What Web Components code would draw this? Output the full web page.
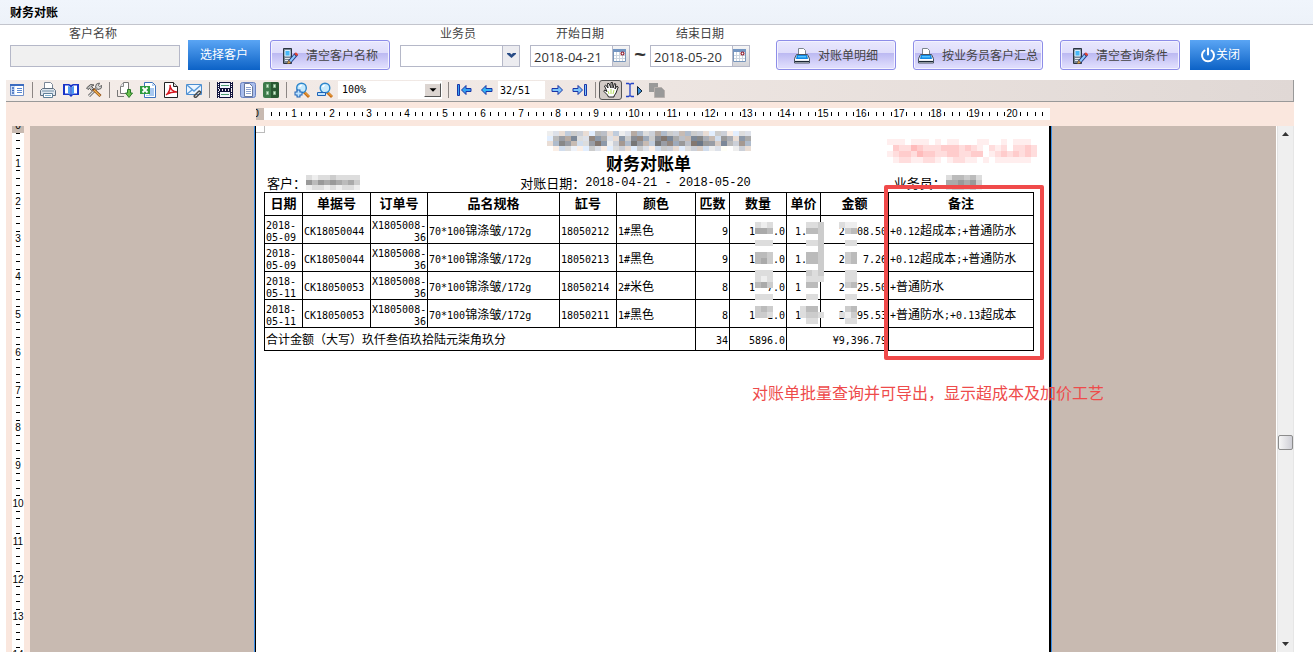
<!DOCTYPE html>
<html lang="zh-CN">
<head>
<meta charset="utf-8">
<title>财务对账</title>
<style>
html,body{height:100%}
body{margin:0;background:#fff;font:12px/18px "Open Sans","Noto Sans CJK SC",sans-serif;color:#333;overflow:hidden}
</style>
</head>
<body>
<finance-app></finance-app>
<script>
const ICONS={
 side:'<path fill="#fff" stroke="#6f8fc8" d="M1.500 2.500h13v11h-13z"/><path fill="#3c6cc0" d="M1 2h14v2H1z"/><path fill="#cfe0fa" d="M2 4h4v9H2z"/><path stroke="#3a66b8" stroke-width="1.500" d="M3 6h2M3 8.500h2M3 11h2"/><path stroke="#5c88d0" d="M8 6.500h5M8 8.500h5M8 10.500h5"/>',
 print:'<path fill="#fff" stroke="#7b8797" d="M4.500 7V.500h6l2 2V7"/><path fill="#dfe6ee" stroke="#5f6f80" d="M2.500 6.500h11l2 2v5H.500v-5z"/><path fill="#a9bccb" d="M2 8h12v2H2z"/><path fill="#fff" stroke="#5f7f98" d="M3.500 11.500h9v4h-9z"/><path stroke="#7fb0d0" d="M5 13.500h6"/>',
 book:'<path fill="#1733c8" d="M0 2h6l2 1 2-1h6v11h-6l-2 2-2-2H0z"/><path fill="#fff" d="M2 3.500h3.500L7.300 5v7.500L5.500 11.500H2zM14 3.500h-3.500L8.700 5v7.500l1.800-1H14z"/><path fill="#4d9bf2" d="M5 4l2.300 1v7.500L5 11.500zM11 4L8.700 5v7.500l2.300-1z"/>',
 tools:'<path stroke="#555" stroke-width="2.800" d="M3 14l8-8"/><path stroke="#e2e2e2" stroke-width="1.200" d="M3 14l8-8"/><path fill="#d8d8d8" stroke="#666" d="M9.500 5l1-3 3-1-1 2.500 1 1L16 3.500l-1 3-3 1z"/><path stroke="#8a4a16" stroke-width="3" d="M7 7l7.500 7"/><path stroke="#f0b04a" stroke-width="1.400" d="M8 8l6 5.700"/><path fill="#bcbcbc" stroke="#555" d="M.500 6l4-3.500 3.500.500L5.500 4.500 7.500 6.500 5.500 8.500l-2-2-1.500 1z"/>',
 export:'<path fill="#fff" stroke="#777" d="M3.500 11.500v-7l3-4h5v11z"/><path fill="#e8e8ee" stroke="#888" d="M6.500.500v4h-3"/><path fill="none" stroke="#777" d="M.500 8v6.500H7"/><path fill="#6cc04e" stroke="#2a7a2a" d="M10.500 7.500h3v3.500h2L12 15.500 8.500 11h2z"/>',
 excel:'<path fill="#fff" stroke="#3d72bd" d="M4.500.500h8l3 3v12h-11z"/><path fill="#a8c8f0" d="M12 1v3h3zM9 6h5v8H6v-1h3z"/><path fill="#2d9a3e" d="M0 4h10v8H0z"/><path stroke="#fff" stroke-width="1.800" d="M2.500 5.500l5 5M7.500 5.500l-5 5"/>',
 pdf:'<path fill="#fff" stroke="#222" d="M1.500.500h9l4 4v11h-13z"/><path fill="#ddd" stroke="#222" d="M10.500.500v4h4"/><path fill="none" stroke="#d71920" stroke-width="1.500" d="M3 13c3-2 5-7 4-10 0 4 3 7 7 7-4-.500-7 .500-10 2"/>',
 mail:'<path fill="#eef6ff" stroke="#4c8ed0" d="M.500 2.500h15v10H.500z"/><path fill="none" stroke="#5b9ad8" stroke-width="1.400" d="M1 3l7 6 7-6M1 12l5-4"/><path fill="none" stroke="#4a4a4a" stroke-width="1.500" d="M8.500 13.500l4-4c1-1 2.800.500 1.600 1.800l-3.600 3.700c-1.500 1-3-.500-2-1.500z"/>',
 film:'<path fill="#11133c" d="M0 0h16v7H0zM0 9h16v7H0z"/><path fill="#f4f8ff" d="M3 1h10v5H3zM3 10h10v5H3z"/><path stroke="#4c9a70" d="M4 3.500h8M4 12.500h8"/><path stroke="#fff" stroke-dasharray="1 1" d="M1.500 0v7M14.500 0v7M1.500 9v7M14.500 9v7"/><path stroke="#11133c" stroke-dasharray="2 1" d="M0 8h16" stroke-width="2"/>',
 page:'<rect x=".500" y=".500" width="15" height="15" rx="2" fill="#a9bdec" stroke="#6a82c0"/><path fill="#fff" stroke="#68789c" d="M4.500 1.500h5l3 3v10h-8z"/><path stroke="#8ca2d0" d="M6 5.500h5M6 7.500h5M6 9.500h5M6 11.500h5"/>',
 grid:'<rect width="16" height="16" rx="2" fill="#3d7a4a"/><path fill="#285832" d="M8 0h6a2 2 0 012 2v12a2 2 0 01-2 2H8z"/><path fill="#d6eed8" stroke="#88b890" d="M3.500 2.500h2v3h-2zM10.500 2.500h2v3h-2zM3.500 9.500h2v3h-2zM10.500 9.500h2v3h-2z"/>',
 zin:'<path stroke="#c76a14" stroke-width="2.800" d="M10 10l5 5"/><path stroke="#f4b84e" d="M10.500 10l4.500 4.500"/><circle cx="7.500" cy="6" r="4.800" fill="#c8eafc" stroke="#2c86cc" stroke-width="1.400"/><path stroke="#fff" stroke-width="1.500" d="M5.500 5l2-2"/><path stroke="#1c62b6" stroke-width="4" d="M4.500 7.500v8M.500 11.500h8"/><path stroke="#bfe4ff" stroke-width="1.800" d="M4.500 8.500v6M1.500 11.500h6"/>',
 zout:'<path stroke="#c76a14" stroke-width="2.800" d="M10 10l5 5"/><path stroke="#f4b84e" d="M10.500 10l4.500 4.500"/><circle cx="8" cy="6" r="4.800" fill="#c8eafc" stroke="#2c86cc" stroke-width="1.400"/><path stroke="#fff" stroke-width="1.500" d="M5.500 5l2-2"/><path fill="#bfe4ff" stroke="#1c62b6" d="M.500 10.500h8v3h-8z"/>',
 first:'<path fill="#36a2f0" stroke="#1a35a8" d="M1.500 2.500h2v11h-2zM5.500 8l4.500-4.500v3h5v3h-5v3z"/>',
 prev:'<path fill="#36b4f4" stroke="#1a35a8" d="M2.500 8L7 3.500v3h6v3H7v3z"/>',
 next:'<path fill="#7cc4fa" stroke="#1a35a8" d="M13.500 8L9 3.500v3H3v3h6v3z"/>',
 last:'<path fill="#7cc4fa" stroke="#1a35a8" d="M12.500 2.500h2v11h-2zM10.500 8L6 3.500v3H1v3h5v3z"/>',
 hand:'<path fill="#fff" stroke="#222" d="M5.500 15l-1-2L1 9.500 1.500 8 4 9.500 1.500 4l1.200-1L5 6 4.500 1.500H6L8 6V.500h1.500L10 6l1.500-4.500 1.300.500L12 7l2-3 1.200 1L13 11l-2 3v1z"/><path stroke="#b8e060" d="M5 9l1 3M8 7v5M11 8l-1 4"/>',
 text:'<path fill="none" stroke="#2343c8" stroke-width="1.300" d="M0 1.500h2.500l1.500 1 1.500-1H8M4 2v12M0 14.500h2.500l1.500-1 1.500 1H8"/><path fill="#3c8fd8" stroke="#123" d="M11.500 4.500L16 9l-4.500 4z"/>',
 copy:'<path fill="#999" d="M0 1h9v9H0z"/><path fill="#999" stroke="#b7b0ad" d="M5.500 5.500h7l3 3v7h-10z"/>',
 edit:'<path fill="#778492" stroke="#2a3440" d="M1.500.500h8v15h-8z"/><path fill="#48b8f8" stroke="#d8ecfa" d="M3 2.500h5V8H3z"/><path stroke="#e4edf3" d="M3 10.500h5M3 12.500h4"/><path stroke="#273c80" stroke-width="4" d="M7 14.500L14.500 6"/><path stroke="#8ccaff" stroke-width="2" d="M8 13.500l5-6"/><path stroke="#e34432" stroke-width="3" d="M13.500 7l1.500-1.600"/><path fill="#f8c36b" stroke="#7a501c" stroke-width=".700" d="M5.500 16l1-3.500 2.500 2z"/>',
 printer:'<path fill="#fff" stroke="#7b848d" d="M4.500 8V.500h5l2 2V8z"/><path fill="#d2d8df" stroke="#4b5563" d="M2.500 6.500h11l2 4v4.500H.500v-4.500z"/><path fill="#1289e5" d="M3 7h10l1 4H2z"/><path fill="#54c5ff" d="M4 8h8v1.500H4z"/><path fill="#fff" d="M1 11h14v1.500H1z"/><path fill="#1b2733" d="M1 13h14v1H1z"/>',
 power:'<path stroke="#fff" stroke-width="2" stroke-linecap="round" d="M4.500 3.500a6 6 0 1 0 7 0M8 1.500v6"/>',
 cal:'<path fill="#fff" stroke="#7896bb" d="M.500 1.500h12v12H.500z"/><path fill="#7496c2" d="M0 1h13v3H0z"/><path stroke="#cdd6e0" d="M1 7.500h11M1 10.500h11M3.500 4v9M6.500 4v9M9.500 4v9"/><circle cx="9.500" cy="5.500" r="1.500" fill="#fff" stroke="#901a2a" stroke-width="1.200"/>',
 chev:'<path fill="#284c86" d="M4 5h3l1.500 1.500L10 5h3v1L8.500 10 4 6z"/>',
 tri:'<path d="M4 6h8l-4 4z"/>'
};
const svg=(n,s=16)=>`<svg width="${s}" height="${s}" viewBox="0 0 16 16" fill="none" aria-hidden="true">${ICONS[n]}</svg>`;
class Base extends HTMLElement{
  connectedCallback(){
    if(this.shadowRoot)return;
    this.attachShadow({mode:'open'}).innerHTML='<style>*{box-sizing:border-box}svg{display:block;flex:none}'+this.css()+'</style>'+this.view();
  }
  a(n){return this.getAttribute(n)||''}
}

customElements.define('action-button',class extends Base{
  css(){return `:host{display:block;margin-top:15px}
  button{display:flex;align-items:center;justify-content:center;width:100%;height:30px;padding:1px 0 0;font:inherit;white-space:nowrap;color:#444;gap:8px;border:1px solid #8d8de8;border-radius:3px;box-shadow:inset 0 0 0 1px #f4f3ff;background:linear-gradient(#e9e8fd 0,#dfddfb 42%,#bcb9f2 44%,#dddbfc 90%)}
  :host([primary]) button{padding:0;border:0;border-radius:0;color:#fff;gap:0;box-shadow:none;background:linear-gradient(#5aa5f4,#0c62c6)}`}
  view(){const i=this.a('icon');return `<button type="button">${i?svg(i):''}<span><slot></slot></span></button>`}
});

customElements.define('text-field',class extends Base{
  css(){return `:host{display:block}
  label{display:block;height:20px;line-height:18px;text-align:center;padding-right:4px;color:#444}
  .date{padding-right:0}
  .box{display:flex;height:22px;border:1px solid #b5b8c8;background:#fff}
  input,select{flex:1;min-width:0;border:0;padding:2px 3px 0;margin:0;font:13px/18px "Open Sans","Noto Sans CJK SC",sans-serif;color:#333;background:none;appearance:none;border-radius:0;outline:0}
  :host([readonly]) .box{background:#f0f0f0}
  .trig{display:flex;align-items:center;justify-content:center;width:17px;border:0;border-left:1px solid #b5b8c8;padding:0;background:linear-gradient(#f6f6f6,#d4d4d8)}
  .combo .trig{pointer-events:none;background:#ececf0}`}
  view(){
    const k=this.a('kind'),l=this.a('label');
    if(k=='select')return `<label for="f">${l}</label><div class="box combo"><select id="f"><option></option></select><span class="trig">${svg('chev')}</span></div>`;
    if(k=='date')return `<label class="date" for="f">${l}</label><div class="box"><input id="f" type="text" value="${this.a('value')}"><button class="trig" type="button" aria-label="${l}">${svg('cal')}</button></div>`;
    return `<label for="f">${l}</label><div class="box"><input id="f" type="text" readonly></div>`;
  }
});

customElements.define('page-header',class extends Base{
  css(){return `:host{display:block;height:25px;border-bottom:1px solid #c3c5cd;background:linear-gradient(#f0f5fc,#edf2f9)}
  h1{margin:0;padding-left:10px;font:bold 12px/24px "Noto Sans CJK SC",sans-serif;color:#000}`}
  view(){return '<h1><slot></slot></h1>'}
});

customElements.define('query-bar',class extends Base{
  css(){return `:host{display:flex;align-items:flex-start;height:55px;padding-left:10px;gap:10px}
  .w60{width:60px}.w72{width:72px}.w100{width:100px}.w120{width:120px}.w130{width:130px}.w170{width:170px}
  .range,.acts,.cust{display:flex;align-items:flex-start}
  .cust{gap:8px}.range{margin-right:16px}.acts{gap:17px}
  .tilde{width:20px;padding-top:18px;text-align:center;font:bold 20px/22px "Liberation Sans",sans-serif;color:#333}`}
  view(){return `<div class="cust"><text-field class="w170" label="客户名称" readonly></text-field><action-button primary class="w72">选择客户</action-button></div>
  <action-button class="w120" icon="edit">清空客户名称</action-button>
  <text-field class="w120" kind="select" label="业务员"></text-field>
  <div class="range"><text-field class="w100" kind="date" label="开始日期" value="2018-04-21"></text-field><span class="tilde">~</span><text-field class="w100" kind="date" label="结束日期" value="2018-05-20"></text-field></div>
  <div class="acts"><action-button class="w120" icon="printer">对账单明细</action-button><action-button class="w130" icon="printer">按业务员客户汇总</action-button><action-button class="w120" icon="edit">清空查询条件</action-button></div>
  <action-button primary class="w60" icon="power">关闭</action-button>`}
});

customElements.define('report-toolbar',class extends Base{
  css(){return `:host{display:flex;align-items:flex-start;height:22px;border-bottom:1px solid #999;border-right:1px solid #999;background:linear-gradient(90deg,#f4ece8,#f0e8e4 40%,#e0d8d5);font:10px/16px "DejaVu Sans Mono",monospace;color:#000}
  button{display:flex;align-items:center;justify-content:center;width:23px;height:20px;padding:0;border:0;background:none}
  button:first-of-type{width:22px}
  button.on{border:1px solid #555;border-radius:3px;background:#d2cbc7}
  i{width:1px;height:16px;background:#8c8684;margin:2px 3px 0 4px}
  .combo{display:flex;width:104px;height:18px;background:#fff;margin:1px 2px 0;align-items:center;position:relative}
  select,input{height:18px;border:0;margin:0;padding:0 4px;background:#fff;font:inherit;color:#000;appearance:none;outline:0;border-radius:0}
  select{width:100%}
  .arr{position:absolute;right:1px;top:2px;width:17px;height:14px;display:flex;align-items:center;justify-content:center;background:#dcd5d1;border:1px solid;border-color:#fff #555 #555 #fff;pointer-events:none}
  .arr path{fill:#000}
  input{width:47px;padding:0 2px;margin-top:1px}`}
  view(){
    const b=(n,t,c='')=>`<button type="button" class="${c}" aria-label="${t}">${svg(n)}</button>`;
    return b('side','目录')+'<i></i>'+b('print','打印')+b('book','页面')+b('tools','设置')+'<i></i>'+b('export','导出')+b('excel','Excel')+b('pdf','PDF')+b('mail','邮件')+'<i></i>'+b('film','连续')+b('page','单页')+b('grid','多页')+'<i></i>'+b('zin','放大')+b('zout','缩小')
    +`<span class="combo"><select aria-label="缩放"><option>100%</option></select><span class="arr">${svg('tri',14)}</span></span><i></i>`
    +b('first','首页')+b('prev','上一页')+'<input type="text" aria-label="页码" value="32/51">'+b('next','下一页')+b('last','末页')+'<i></i>'+b('hand','平移','on')+b('text','选择文本')+b('copy','复制');
  }
});

/* centimetre ruler, 96 dpi: one fifth of a centimetre per tick */
customElements.define('cm-ruler',class extends Base{
  css(){return `:host{display:block;overflow:hidden;background:#fff}text{font:10px "Liberation Sans",sans-serif;fill:#000;text-anchor:middle}`}
  view(){
    const v=this.a('axis')=='y',n=v?Math.ceil((innerHeight-128)/37.8):+this.a('cm'),len=Math.round(n*37.8);
    let s=v?'<path fill="#c8bab1" d="M0 0h12v7H0z"/>':'<path fill="#c8bab1" d="M0 0h8v12H0z"/>';
    for(let k=0;k<n*5+(v?1:0);k++){
      const p=Math.round(k*7.56);
      if(k%5==0){const t=k/5;s+=v?`<text x="6" y="${p+3}">${t}</text>`:`<text x="${p}" y="9">${t}</text>`}
      else if(k>1||v)s+=v?`<path fill="#000" d="M4 ${p-1}h4v1h-4z"/>`:`<path fill="#000" d="M${p} 4h1v4h-1z"/>`;
    }
    return `<svg width="${v?12:len}" height="${v?len:12}">${s}</svg>`;
  }
});

/* pixelated patch: each character is one block, 0 dark .. f white, dot is empty */
customElements.define('mosaic-patch',class extends Base{
  css(){return ':host{display:inline-block}'}
  view(){
    const rows=this.a('rows').split('/'),u=6,h=+this.a('h')||6,pink=this.hasAttribute('pink');
    const tint=[[0,0,0],[-6,0,8],[6,0,-4],[0,2,6]];
    let s='';
    rows.forEach((r,y)=>[...r].forEach((c,x)=>{
      if(c=='.')return;
      const g=parseInt(c,16)*17,t=this.hasAttribute('tint')?tint[(x*3+y)%4]:tint[0];
      const col=pink?`rgb(255,${g},${g})`:`rgb(${t.map(d=>Math.min(255,g+d*2)).join()})`;
      s+=`<rect x="${x*u}" y="${y*h}" width="${u}" height="${h}" fill="${col}"/>`;
    }));
    return `<svg width="${rows[0].length*u}" height="${rows.length*h}" shape-rendering="crispEdges">${s}</svg>`;
  }
});

customElements.define('report-page',class extends Base{
  css(){return `:host{display:block;position:relative;width:798px;border-left:1px solid #3b8fe8;border-right:1px solid #3b8fe8;background:#fff;color:#000;font:12px/14px "Noto Sans CJK SC",sans-serif}
  .sheet{height:100%;border-left:1px solid #000;border-right:2px solid #000;padding:0 8px}
  .corner{position:absolute;left:1px;top:0;width:9px;height:7px;border:solid #bbb;border-width:0 1px 1px 0}
  .org{display:flex;justify-content:center;padding:5px 8px 0 0;height:27px}
  h2{margin:0;padding-right:8px;text-align:center;font:bold 17px/20px "Noto Sans CJK SC",sans-serif}
  .info{display:grid;grid-template-columns:1fr 1fr 1fr;height:19px;line-height:17px;font-size:13px;white-space:nowrap}
  .info span{display:flex;align-items:center}
  .info .m{justify-content:center;padding-right:34px}
  .info .r{padding-left:109px}
  .info .l{padding-left:3px}
  .n{font-family:"DejaVu Sans Mono",monospace;font-size:10px;line-height:0}
  .info .n{font-family:"Liberation Mono",monospace;font-size:12px;white-space:pre}
  table{border-collapse:collapse;table-layout:fixed;width:769px}
  th,td{border:1px solid #000;padding:0 1px;font-weight:400;text-align:left;white-space:pre;line-height:12px}
  th{height:23px;font-weight:700;font-size:13px;text-align:center;padding:0 0 2px}
  td{height:28px}
  .total td{height:23px}
  .d{text-align:right}
  .pink{position:absolute;right:14px;top:13px}
  .q,.p,.s{position:absolute;top:96px}
  .q{left:500px}.p{left:545px}.s{left:584px}
  .mark{position:absolute;left:629px;top:59px;width:160px;height:175px;border:4px solid #f04a4a;border-radius:2px}
  .note{position:absolute;left:497px;top:256px;margin:0;font-size:16px;line-height:20px;color:#ee4b4b;white-space:nowrap}`}
  view(){
    const t=s=>s.replace(/[\x20-\x7e¥]+/g,m=>`<span class="n">${m}</span>`);
    const w=[38,68,57,132,57,79,34,57,34,68,145];
    const rows=[
     ['2018-\n05-09','CK18050044','X1805008-\n36','70*100锦涤皱/172g','18050212','1#黑色','9','1   .0','1.  ','2  08.50','+0.12超成本;+普通防水'],
     ['2018-\n05-09','CK18050044','X1805008-\n36','70*100锦涤皱/172g','18050213','1#黑色','9','1  3.0','1.  ','2   7.26','+0.12超成本;+普通防水'],
     ['2018-\n05-11','CK18050053','X1805008-\n36','70*100锦涤皱/172g','18050214','2#米色','8','1  7.0','1   ','2  25.50','+普通防水'],
     ['2018-\n05-11','CK18050053','X1805008-\n36','70*100锦涤皱/172g','18050211','1#黑色','8','1  1.0','1   ','2  95.53','+普通防水;+0.13超成本']];
    return `<div class="sheet"><div class="corner"></div>
    <div class="org"><mosaic-patch tint rows="eddcccdebbdcedabdcabccbbccdecceedd/eb9a8dd89add9c88ac878abb88abd9ad9a/db89bdd979ec9b79bc798a9b7799c8bc9b/.eddeeecdeedcdecdedccdedccdedf.ecd" h="5"></mosaic-patch></div>
    <h2>财务对账单</h2>
    <div class="info"><span class="l">客户：<mosaic-patch rows="deddcdddd/9b9a9abac/eddededde" h="5"></mosaic-patch></span><span class="m">对账日期：<span class="n">2018-04-21 - 2018-05-20</span></span><span class="r">业务员：<mosaic-patch rows="dbbcbd/aa9a9c/dccdce" h="5"></mosaic-patch></span></div>
    <table><colgroup>${w.map(x=>`<col style="width:${x}px">`).join('')}</colgroup>
    <thead><tr>${['日期','单据号','订单号','品名规格','缸号','颜色','匹数','数量','单价','金额','备注'].map(h=>`<th scope="col">${h}</th>`).join('')}</tr></thead>
    <tbody>${rows.map(r=>`<tr>${r.map((c,i)=>`<td class="${i==2||i>5&&i<10?'d':''}">${c.split('\n').map(t).join('\n')}</td>`).join('')}</tr>`).join('')}
    <tr class="total"><td colspan="6">合计金额（大写）玖仟叁佰玖拾陆元柒角玖分</td><td class="d">${t('34')}</td><td class="d">${t('5896.0')}</td><td class="d" colspan="2">${t('¥9,396.79')}</td><td></td></tr></tbody></table></div>
    <mosaic-patch class="pink" pink rows="eeefeeefefeefffeeffefeeef/fcddbcdddcccdcdefdedfddcd/edccdbccddccddccfedcdcdcd/feddeeddefeddeefefeeeeeef"></mosaic-patch>
    <mosaic-patch class="q" rows="ded/aab/.../ddd/.../bbc/bac/.../ddd/ded/bac/.../ddd/.../cbc/ccd"></mosaic-patch>
    <mosaic-patch class="p" rows=".ddc/.bbc/...c/.ddc/...c/.bbc/.bbc/...c/.cdc/.ddd/.bb./..../.dd./..../dbb./dccd/.dd."></mosaic-patch>
    <mosaic-patch class="s" rows="dee/.cb/.../.dd/.../.cb/.cb/.../.dd/.dd/.cb/.../.dd/.../.cb/dec/.dd"></mosaic-patch>
    <div class="mark"></div><p class="note">对账单批量查询并可导出，显示超成本及加价工艺</p>`;
  }
});

customElements.define('scroll-track',class extends Base{
  css(){return `:host{display:flex;flex-direction:column;align-items:center;width:18px;background:#efefef;border-left:1px solid #fff;box-shadow:inset 1px 0 #e2e2e2,inset -1px 0 #e6e6e6}
  .up{flex:11}.down{flex:7}
  .thumb{width:15px;height:15px;border:1px solid #8c8c8c;border-radius:2px;background:linear-gradient(90deg,#f6f6f6,#cfcfd6)}`}
  view(){return `<svg width="17" height="17"><path fill="#333" d="M5 10l3.500-4 3.500 4z"/></svg><span class="up"></span><span class="thumb"></span><span class="down"></span><svg width="17" height="17"><path fill="#333" d="M5 7h7l-3.500 4z"/></svg>`}
});

customElements.define('report-viewer',class extends Base{
  css(){return `:host{display:grid;grid-template:24px minmax(0,1fr)/24px minmax(0,1fr) 18px;background:#fae7de;overflow:hidden}
  .h{grid-column:2;display:flex;justify-content:center;align-items:center}
  .h cm-ruler{height:12px}
  .v{grid-column:1;grid-row:2;margin:0 6px;overflow:hidden}
  .v cm-ruler{width:12px}
  .desk{grid-column:2;grid-row:2;display:flex;justify-content:center;background:#c8bab1;min-height:0}
  scroll-track{grid-column:3;grid-row:2}`}
  view(){return '<div class="h"><cm-ruler axis="x" cm="21"></cm-ruler></div><div class="v"><cm-ruler axis="y"></cm-ruler></div><div class="desk"><report-page></report-page></div><scroll-track></scroll-track>'}
});

customElements.define('finance-app',class extends Base{
  css(){return `:host{display:flex;flex-direction:column;height:100vh}
  page-header,query-bar,report-toolbar{flex:none}
  report-toolbar,report-viewer{margin:0 19px 0 6px}
  report-viewer{flex:1;min-height:0;margin-bottom:2px}`}
  view(){return '<page-header>财务对账</page-header><query-bar></query-bar><report-toolbar></report-toolbar><report-viewer></report-viewer>'}
});
</script>
</body>
</html>
